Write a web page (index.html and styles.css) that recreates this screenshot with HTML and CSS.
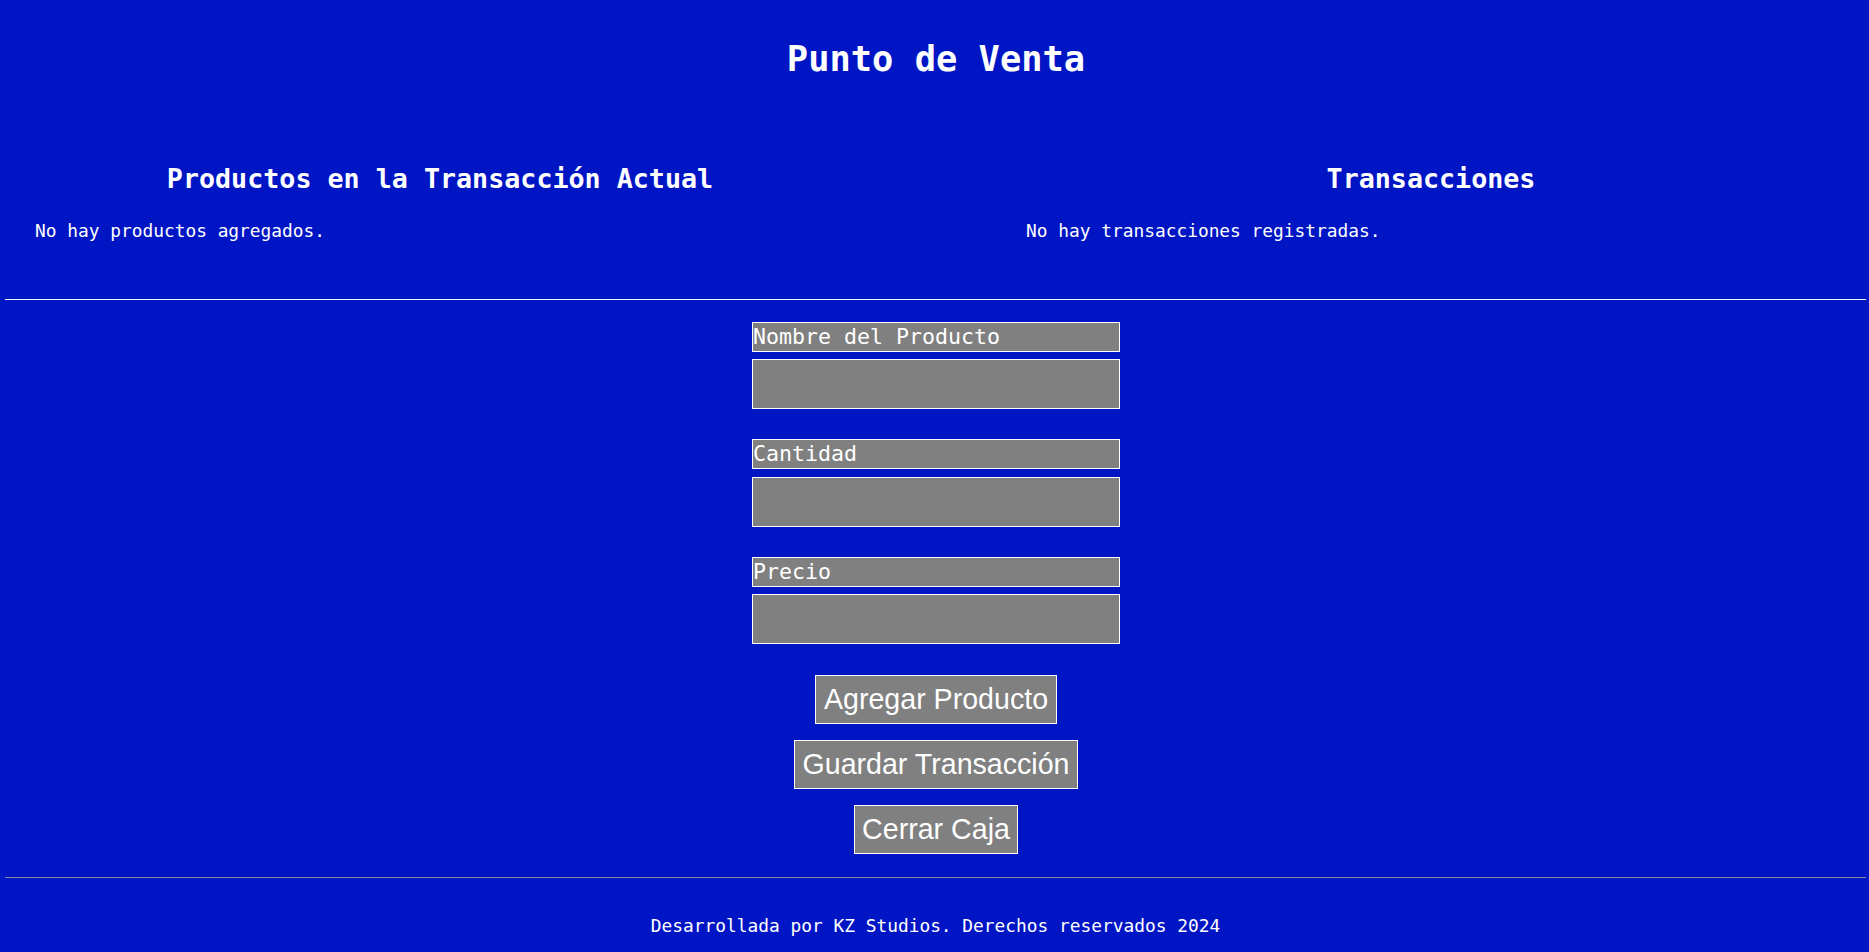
FILE: index.html
```html
<!DOCTYPE html>
<html lang="es">
<head>
<meta charset="utf-8">
<title>Punto de Venta</title>
<link rel="stylesheet" href="styles.css">
</head>
<body>
  <header class="site-header">
    <h1 class="title">Punto de Venta</h1>
  </header>

  <section class="panels">
    <div class="panel">
      <h2 class="panel-title">Productos en la Transacción Actual</h2>
      <p class="panel-empty">No hay productos agregados.</p>
    </div>
    <div class="panel">
      <h2 class="panel-title">Transacciones</h2>
      <p class="panel-empty">No hay transacciones registradas.</p>
    </div>
  </section>

  <hr class="divider">

  <form class="product-form">
    <label class="field-label" for="nombre">Nombre del Producto</label>
    <input class="field-input" id="nombre" type="text">
    <label class="field-label" for="cantidad">Cantidad</label>
    <input class="field-input" id="cantidad" type="number">
    <label class="field-label" for="precio">Precio</label>
    <input class="field-input" id="precio" type="number">

    <div class="actions">
      <button class="action-btn" type="button">Agregar Producto</button>
      <button class="action-btn" type="button">Guardar Transacción</button>
      <button class="action-btn" type="button">Cerrar Caja</button>
    </div>
  </form>

  <footer class="site-footer">
    <p class="footer-text">Desarrollada por KZ Studios. Derechos reservados 2024</p>
  </footer>
</body>
</html>
```

FILE: styles.css
```css
* {
  box-sizing: border-box;
}

html, body {
  margin: 0;
  padding: 0;
}

body {
  background: #0015c4;
  color: #ffffff;
  font-family: "DejaVu Sans Mono", "Liberation Mono", monospace;
  font-size: 17.85px;
  padding: 0 2px 0 5px;
  overflow: hidden;
}

.site-header {
  padding-top: 37.5px;
  text-align: center;
}

.title {
  margin: 0;
  font-size: 35.4px;
  line-height: 42px;
  font-weight: bold;
}

.panels {
  display: grid;
  grid-template-columns: 860px 860px;
  justify-content: space-between;
  padding: 83.3px 6px 57.2px 5px;
}

.panel {
  padding: 0 25px;
}

.panel-title {
  margin: 0 0 25px;
  font-size: 26.7px;
  line-height: 32px;
  font-weight: bold;
  text-align: center;
}

.panel-empty {
  margin: 0;
  font-size: 17.85px;
  line-height: 22px;
}

.divider {
  margin: 0 1px 0 0;
  height: 0;
  border: 0;
  border-top: 1px solid #ffffff;
}

.product-form {
  width: 368px;
  margin: 0 auto;
  padding-top: 22px;
}

.field-label {
  display: block;
  height: 30px;
  margin-bottom: 7.5px;
  background: #808080;
  border: 1px solid #ffffff;
  font-size: 21.6px;
  line-height: 28px;
  white-space: nowrap;
}

.field-input {
  display: block;
  width: 100%;
  height: 50px;
  margin: 0 0 30px;
  background: #808080;
  border: 1px solid #ffffff;
  color: #ffffff;
  font-family: "DejaVu Sans Mono", monospace;
  font-size: 18px;
  padding: 0 4px;
  outline: none;
}

.actions {
  display: flex;
  flex-direction: column;
  align-items: center;
  gap: 16px;
  padding-top: 0.5px;
  padding-bottom: 23px;
}

.action-btn {
  background: #808080;
  border: 1px solid #ffffff;
  color: #ffffff;
  font-family: "Liberation Sans", Arial, sans-serif;
  font-size: 28.6px;
  line-height: 33px;
  padding: 7px 7.5px;
  margin: 0;
  border-radius: 0;
  cursor: pointer;
}

.site-footer {
  margin: 0 1px 0 0;
  border-top: 1px solid #8a8aa8;
  padding-top: 36.8px;
  text-align: center;
}

.footer-text {
  margin: 0;
  font-size: 17.85px;
  line-height: 22px;
}
```
